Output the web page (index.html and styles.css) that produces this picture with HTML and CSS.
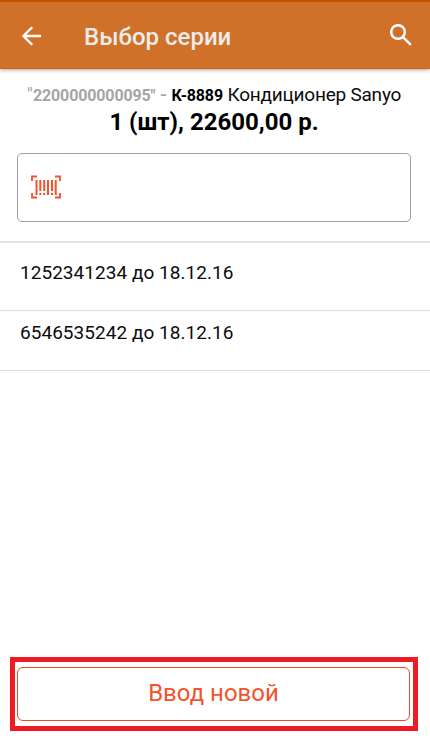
FILE: index.html
```html
<!DOCTYPE html>
<html lang="ru">
<head>
<meta charset="utf-8">
<title>Выбор серии</title>
<link rel="stylesheet" href="styles.css">
</head>
<body>
<header class="toolbar">
  <svg class="back" viewBox="0 0 20 20"><path d="M19 10H1.8M10.2 1.2L1.4 10l8.8 8.8"/></svg>
  <h1 class="title">Выбор серии</h1>
  <svg class="search" viewBox="0 0 22 22"><circle cx="8" cy="8" r="6.8"/><path d="M12.8 12.8l8 8"/></svg>
</header>
<main class="content">
  <section class="product">
    <p class="name"><span class="quote">"</span><span class="code">2200000000095"</span><span class="dash"> - </span><span class="article">К-8889</span><span class="model"> Кондиционер Sanyo</span></p>
    <p class="amount">1 (шт), 22600,00 р.</p>
  </section>
  <div class="scan">
    <svg class="barcode" viewBox="0 0 30 24">
      <path class="corner" d="M1 6V1.5h5M24 1.5h5V6M1 18v4.5h5M24 22.5h5V18"/>
      <path class="bars" d="M5.5 5v15M9.3 5v11M13.2 5v11M17 5v15M21 5v11M24.7 5v15M9.3 18v2M13.2 18v2M21 18v2"/>
    </svg>
  </div>
  <ul class="series">
    <li class="row">1252341234 до 18.12.16</li>
    <li class="row">6546535242 до 18.12.16</li>
  </ul>
</main>
<footer class="highlight"><button class="create">Ввод новой</button></footer>
</body>
</html>
```
FILE: styles.css
```css
* { box-sizing: border-box; }
body {
  margin: 0;
  height: 741px;
  display: flex;
  flex-direction: column;
  background: #fff;
  color: #0c0c0c;
  font-family: Roboto, sans-serif;
  overflow: hidden;
}
.toolbar {
  height: 69px;
  flex: none;
  display: flex;
  align-items: center;
  padding: 1px 18px 0 22px;
  background: #cf7128;
  border-top: 2px solid #c15400;
  border-bottom: 1px solid #c9640f;
  box-shadow: 0 1px 4px rgba(0, 0, 0, .35);
}
.back, .search { fill: none; stroke: #fff; }
.back { width: 20px; height: 20px; stroke-width: 2.3; }
.search { width: 22px; height: 22px; stroke-width: 2.5; margin: 0 0 1px auto; }
.title {
  margin: 2px 0 0 42px;
  color: #ececec;
  font-size: 24px;
  font-weight: 500;
  line-height: 30px;
}
.content { flex: 1; }
.product { height: 84px; padding: 14px 2px 0 0; text-align: center; white-space: nowrap; }
.name { margin: 0; height: 24px; line-height: 24px; font-size: 19px; }
.quote, .dash { color: #a5a5a5; }
.code { color: #a5a5a5; font-size: 16px; font-weight: 700; letter-spacing: -.13px; }
.dash { font-weight: 500; }
.article { font-size: 16px; font-weight: 700; color: #000; letter-spacing: -.15px; }
.model { letter-spacing: -.22px; }
.amount { margin: 0; line-height: 30px; font-size: 24px; font-weight: 700; color: #000; }
.scan {
  width: 394px;
  height: 69px;
  margin-left: 17px;
  padding: 21px 13px;
  border: 1.5px solid #9e9e9e;
  border-radius: 5px;
}
.barcode { display: block; width: 30px; height: 24px; fill: none; stroke: #f4512c; }
.corner { stroke-width: 1.8; }
.bars { stroke-width: 2; }
.series { list-style: none; margin: 19px 0 0; padding: 0; border-top: 2px solid #e3e3e3; }
.row {
  height: 60px;
  padding: 7px 20px 0;
  border-bottom: 1px solid #dcdcdc;
  font-size: 19px;
  line-height: 30px;
  letter-spacing: .04px;
}
.row:first-child { height: 68px; padding-top: 15px; }
.highlight {
  width: 408px;
  height: 74px;
  flex: none;
  margin: 0 0 10px 10px;
  padding: 5px 3px 5px 2px;
  border: 5px solid #ee1b24;
}
.create {
  display: block;
  width: 100%;
  height: 54px;
  padding: 0 0 3px;
  border: 1px solid #f4461f;
  border-radius: 6px;
  background: #fff;
  color: #f4532d;
  font: 400 24px Roboto, sans-serif;
}
```
